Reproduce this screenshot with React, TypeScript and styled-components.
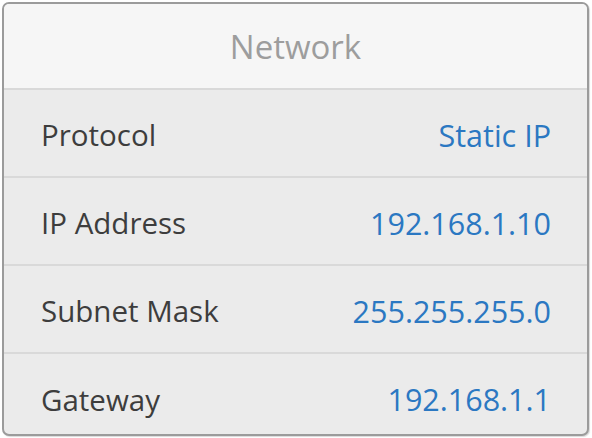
import styled, { createGlobalStyle } from 'styled-components';

const GlobalStyle = createGlobalStyle`
  html, body {
    margin: 0;
    padding: 0;
    background: #ffffff;
  }
  body {
    font-family: "Open Sans", "Noto Sans", sans-serif;
  }
`;

interface Setting {
  label: string;
  value: string;
}

const settings: Setting[] = [
  { label: 'Protocol', value: 'Static IP' },
  { label: 'IP Address', value: '192.168.1.10' },
  { label: 'Subnet Mask', value: '255.255.255.0' },
  { label: 'Gateway', value: '192.168.1.1' },
];

export default function App() {
  return (
    <>
      <GlobalStyle />
      <Page>
        <Panel>
          <Header>Network</Header>
          {settings.map((s) => (
            <Row key={s.label}>
              <Label>{s.label}</Label>
              <Value>{s.value}</Value>
            </Row>
          ))}
        </Panel>
      </Page>
    </>
  );
}

const Page = styled.div`
  padding: 2px 3px 2px 2px;
`;

const Panel = styled.div`
  width: 583px;
  height: 430px;
  border: 2px solid #9b9b9b;
  border-radius: 7px;
  background: #ebebeb;
  overflow: hidden;
  display: flex;
  flex-direction: column;
  box-shadow: 1px 1px 1px rgba(0, 0, 0, 0.15);
`;

const Header = styled.div`
  height: 86px;
  flex-shrink: 0;
  display: flex;
  align-items: center;
  justify-content: center;
  box-sizing: border-box;
  background: #f6f6f6;
  border-bottom: 2px solid #d9d9d9;
  color: #9d9d9d;
  font-size: 33px;
`;

const Row = styled.div`
  height: 88px;
  flex-shrink: 0;
  display: flex;
  align-items: center;
  justify-content: space-between;
  padding: 3px 36px 0 37px;
  box-sizing: border-box;
  border-bottom: 2px solid #d9d9d9;

  &:last-child {
    flex: 1;
    height: auto;
    padding-top: 10px;
    border-bottom: none;
  }
`;

const Label = styled.span`
  color: #3d3d3d;
  font-size: 29.5px;
`;

const Value = styled.span`
  color: #2b78c2;
  font-size: 30.5px;
`;
